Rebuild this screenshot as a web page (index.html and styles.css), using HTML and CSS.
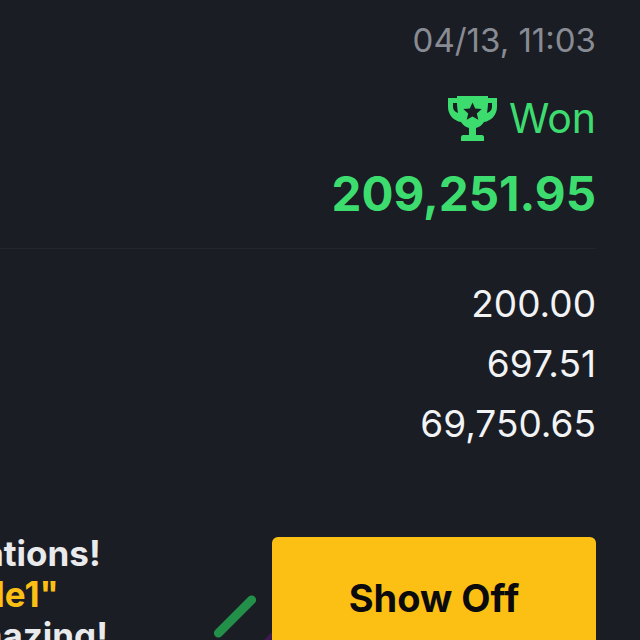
FILE: index.html
```html
<!DOCTYPE html>
<html lang="en">
<head>
  <meta charset="UTF-8" />
  <title>Bet result</title>
  <link rel="stylesheet" href="styles.css">
</head>
<body>
  <div class="page">
    <div class="summary">
      <p class="date">04/13, 11:03</p>
      <div class="status">
        <svg class="trophy" viewBox="0 0 49 45" width="49" height="45">
          <path fill="#3ddc6e" fill-rule="evenodd" d="M0 2h9V0h31v2h9v9c0 8-6 14-13 15-2 3-4 5-8 6v7h6c1 0 2 1 2 2v4H13v-4c0-1 1-2 2-2h6v-7c-4-1-6-3-8-6C6 25 0 19 0 11zM5 7v4c0 3 2 5 5 6-.5-3-1-7-1-10zM44 7h-4c0 3-.5 7-1 10 3-1 5-3 5-6z"/>
          <path fill="#1b1d25" d="M24.500 6.500l2.700 6 6.500.6-4.900 4.300 1.500 6.400-5.800-3.400-5.800 3.400 1.500-6.400-4.900-4.300 6.500-.6z"/>
        </svg>
        <span>Won</span>
      </div>
      <p class="amount">209,251.95</p>
    </div>
    <div class="details">
      <p>200.00</p>
      <p>697.51</p>
      <p>69,750.65</p>
    </div>
    <div class="share">
      <div class="message">
        <p>Congratulations!</p>
        <p class="name">"Alt_Gamble1"</p>
        <p>You are amazing!</p>
      </div>
      <div class="confetti"></div>
      <div class="confetti purple"></div>
      <button class="show-off">Show Off</button>
    </div>
  </div>
</body>
</html>
```

FILE: styles.css
```css
html, body {
  margin: 0;
  height: 100%;
  overflow: hidden;
}

body {
  background-color: #1b1d25;
  font-family: Inter, "Liberation Sans", sans-serif;
  color: #f2f3f5;
}

p {
  margin: 0;
}

.page {
  height: 640px;
  padding-right: 44px;
  display: flex;
  flex-direction: column;
  align-items: stretch;
  box-sizing: border-box;
}

/* top block */
.summary {
  display: flex;
  flex-direction: column;
  align-items: flex-end;
  flex-shrink: 0;
  height: 249px;
  box-sizing: border-box;
  padding-top: 20px;
  border-bottom: 1px solid #23262d;
}

.date {
  font-size: 33px;
  line-height: 40px;
  color: #888b93;
}

.status {
  display: flex;
  align-items: center;
  gap: 12px;
  margin-top: 33px;
  font-size: 41px;
  line-height: 50px;
  color: #3ddc6e;
}

.amount {
  margin-top: 24px;
  font-size: 47.500px;
  line-height: 54px;
  font-weight: 700;
  color: #3ddc6e;
}

/* numbers */
.details {
  display: flex;
  flex-direction: column;
  align-items: flex-end;
  flex-shrink: 0;
  gap: 20px;
  margin-top: 35px;
  font-size: 37px;
  line-height: 40px;
}

/* bottom row */
.share {
  position: relative;
  display: flex;
  justify-content: flex-end;
  flex-shrink: 0;
  margin-top: 93px;
}

.message {
  position: absolute;
  right: 488px;
  top: -4px;
  text-align: left;
  white-space: nowrap;
  font-size: 35px;
  line-height: 41px;
  font-weight: 700;
  color: #e9eaec;
}

.message .name {
  color: #fcc014;
}

.confetti {
  position: absolute;
  left: 207px;
  top: 75px;
  width: 56px;
  height: 9px;
  border-radius: 5px;
  background-color: #23904a;
  transform: rotate(-45deg);
}

.confetti.purple {
  left: 262px;
  top: 99px;
  width: 14px;
  height: 5px;
  background-color: #3d1a52;
}

.show-off {
  position: relative;
  width: 324px;
  height: 124px;
  padding: 0 0 2px;
  border: 0;
  border-radius: 6px;
  background-color: #fcc014;
  color: #0b0b0d;
  font-family: inherit;
  font-size: 38px;
  font-weight: 700;
}
```
